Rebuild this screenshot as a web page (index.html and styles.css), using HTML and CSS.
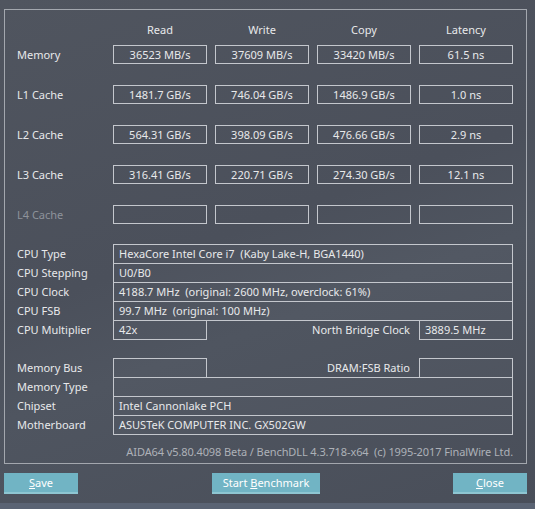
FILE: index.html
```html
<!DOCTYPE html>
<html lang="en">
<head>
    <meta charset="UTF-8">
    <title>AIDA64 Cache &amp; Memory Benchmark</title>
    <link rel="stylesheet" href="styles.css">
</head>
<body>
<div class="win">
    <div class="frame">
        <!-- bench results -->
        <div class="bench">
            <div class="row head">
                <span class="lbl"></span>
                <span class="col">Read</span>
                <span class="col">Write</span>
                <span class="col">Copy</span>
                <span class="col">Latency</span>
            </div>
            <div class="row">
                <span class="lbl">Memory</span>
                <span class="box">36523 MB/s</span>
                <span class="box">37609 MB/s</span>
                <span class="box">33420 MB/s</span>
                <span class="box">61.5 ns</span>
            </div>
            <div class="row">
                <span class="lbl">L1 Cache</span>
                <span class="box">1481.7 GB/s</span>
                <span class="box">746.04 GB/s</span>
                <span class="box">1486.9 GB/s</span>
                <span class="box">1.0 ns</span>
            </div>
            <div class="row">
                <span class="lbl">L2 Cache</span>
                <span class="box">564.31 GB/s</span>
                <span class="box">398.09 GB/s</span>
                <span class="box">476.66 GB/s</span>
                <span class="box">2.9 ns</span>
            </div>
            <div class="row">
                <span class="lbl">L3 Cache</span>
                <span class="box">316.41 GB/s</span>
                <span class="box">220.71 GB/s</span>
                <span class="box">274.30 GB/s</span>
                <span class="box">12.1 ns</span>
            </div>
            <div class="row">
                <span class="lbl dim">L4 Cache</span>
                <span class="box"></span>
                <span class="box"></span>
                <span class="box"></span>
                <span class="box"></span>
            </div>
        </div>

        <!-- cpu info -->
        <div class="info">
            <div class="line">
                <span class="lbl">CPU Type</span>
                <span class="val">HexaCore Intel Core i7&nbsp; (Kaby Lake-H, BGA1440)</span>
            </div>
            <div class="line">
                <span class="lbl">CPU Stepping</span>
                <span class="val">U0/B0</span>
            </div>
            <div class="line">
                <span class="lbl">CPU Clock</span>
                <span class="val">4188.7 MHz&nbsp; (original: 2600 MHz, overclock: 61%)</span>
            </div>
            <div class="line">
                <span class="lbl">CPU FSB</span>
                <span class="val">99.7 MHz&nbsp; (original: 100 MHz)</span>
            </div>
            <div class="line">
                <span class="lbl">CPU Multiplier</span>
                <span class="val short">42x</span>
                <span class="mid">North Bridge Clock</span>
                <span class="val short">3889.5 MHz</span>
            </div>
        </div>

        <!-- board info -->
        <div class="info board">
            <div class="line">
                <span class="lbl">Memory Bus</span>
                <span class="val short"></span>
                <span class="mid">DRAM:FSB Ratio</span>
                <span class="val short"></span>
            </div>
            <div class="line">
                <span class="lbl">Memory Type</span>
                <span class="val"></span>
            </div>
            <div class="line">
                <span class="lbl">Chipset</span>
                <span class="val">Intel Cannonlake PCH</span>
            </div>
            <div class="line">
                <span class="lbl">Motherboard</span>
                <span class="val">ASUSTeK COMPUTER INC. GX502GW</span>
            </div>
        </div>

        <div class="ver">AIDA64 v5.80.4098 Beta / BenchDLL 4.3.718-x64&nbsp; (c) 1995-2017 FinalWire Ltd.</div>
    </div>

    <div class="btns">
        <span class="btn"><u>S</u>ave</span>
        <span class="btn wide">Start <u>B</u>enchmark</span>
        <span class="btn last"><u>C</u>lose</span>
    </div>
</div>
<div class="strip"></div>
</body>
</html>
```

FILE: styles.css
```css
*{
    margin: 0;
    padding: 0;
    box-sizing: border-box;
}
html, body{
    width: 535px;
    height: 509px;
    overflow: hidden;
}
body{
    background: linear-gradient(160deg, #50555f 0%, #4b505b 45%, #4f5560 60%, #494e59 100%);
    font-family: "Noto Sans", "Open Sans", sans-serif;
    font-size: 11px;
    color: #e8e9eb;
    display: flex;
    flex-direction: column;
}
.win{
    flex: 1;
    padding: 9px 8px 0 4px;
}
.frame{
    border: 1px solid #a3a7ae;
    height: 455px;
    padding: 11px 0 0 12px;
}

/* bench grid */
.row{
    display: grid;
    grid-template-columns: 88px repeat(4, 94px);
    column-gap: 8px;
    height: 19px;
    margin-bottom: 21px;
    line-height: 17px;
}
.row.head{
    margin-bottom: 5px;
}
.col{
    text-align: center;
}
.box{
    border: 1px solid #c4c7cd;
    text-align: center;
}
.lbl{
    line-height: 19px;
}
.dim{
    color: #8e939b;
}

/* info tables */
.info{
    margin-top: -1px;
    width: 496px;
}
.info.board{
    margin-top: 18px;
}
.line{
    display: flex;
    height: 20px;
    margin-top: -1px;
}
.line:first-child{
    margin-top: 0;
}
.line .lbl{
    width: 96px;
    flex: none;
}
.val{
    flex: 1;
    border: 1px solid #c4c7cd;
    padding-left: 5px;
    line-height: 18px;
    background: rgba(255, 255, 255, 0.02);
}
.val.short{
    flex: none;
    width: 94px;
}
.mid{
    flex: 1;
    text-align: right;
    padding-right: 9px;
    line-height: 19px;
}
.ver{
    width: 496px;
    text-align: right;
    color: #adb1b8;
    margin-top: 9px;
    letter-spacing: -0.1px;
}

/* buttons */
.btns{
    display: flex;
    margin-top: 9px;
}
.btn{
    width: 74px;
    height: 21px;
    background: #71b4c4;
    border-bottom: 2px solid #8ec6d2;
    color: #fff;
    text-align: center;
    line-height: 19px;
    font-size: 11px;
}
.btn.wide{
    width: 108px;
    margin-left: 134px;
}
.btn.last{
    margin-left: auto;
}
.strip{
    height: 6px;
    background: #5a6373;
}
```
